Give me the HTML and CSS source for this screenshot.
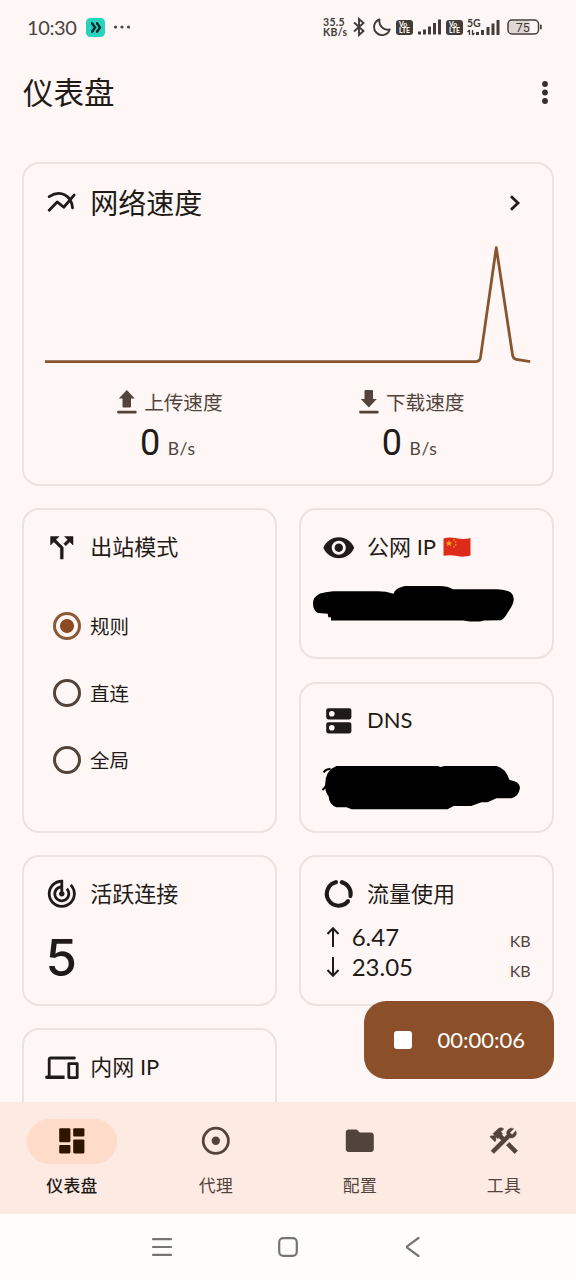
FILE: index.html
```html
<!DOCTYPE html>
<html lang="zh-CN">
<head>
<meta charset="utf-8">
<title>仪表盘</title>
<link rel="stylesheet" href="styles.css">
</head>
<body>
<div class="screen">
  <div class="status">
    <span class="clock">10:30</span>
    <svg class="app-badge" width="19" height="19" viewBox="0 0 19 19"><rect width="19" height="19" rx="4.5" fill="#25d3bf"/><path d="M5 5.3h1.200l2.800 4.100-2.800 4.200H5M10 5.3h1.200l2.800 4.100-2.800 4.200H10" fill="none" stroke="#0b2623" stroke-width="2.300"/></svg>
    <svg class="dots" width="18" height="4" viewBox="0 0 18 4" fill="#4a4543"><circle cx="2.5" cy="2" r="1.6"/><circle cx="9" cy="2" r="1.6"/><circle cx="15.500" cy="2" r="1.6"/></svg>
    <span class="rate"><span>35.5</span><span>KB/s</span></span>
    <svg class="bt" width="12" height="20" viewBox="0 0 12 20" fill="none" stroke="#413c3a" stroke-width="1.9"><path d="M1 5.500l9.500 8.500L6 18V2l4.500 4L1 14.500"/></svg>
    <svg class="moon" width="18" height="18" viewBox="0 0 18 18" fill="none" stroke="#413c3a" stroke-width="1.9" stroke-linejoin="round"><path d="M6.500 1.500A8 8 0 1 0 16.700 11.500A8.500 8.500 0 0 1 6.500 1.500z"/></svg>
    <svg class="volte" width="17" height="15" viewBox="0 0 17 15"><rect width="17" height="15" rx="3" fill="#413c3a"/><text x="3" y="7" class="volte-text">Vo</text><text x="3" y="13.300" class="volte-text">LTE</text></svg>
    <svg class="bars" width="24" height="16" viewBox="0 0 24 16" fill="#413c3a"><rect x="0" y="12.500" width="3" height="3"/><rect x="5" y="10.500" width="3" height="5"/><rect x="10" y="7.500" width="3" height="8"/><rect x="15" y="4" width="3" height="11.500"/><rect x="20" y="0.500" width="3" height="15"/></svg>
    <svg class="volte second" width="17" height="15" viewBox="0 0 17 15"><rect width="17" height="15" rx="3" fill="#413c3a"/><text x="3" y="7" class="volte-text">Vo</text><text x="3" y="13.300" class="volte-text">LTE</text></svg>
    <svg class="five" width="34" height="23" viewBox="0 -3 34 23" fill="#413c3a"><text x="0" y="7.500" class="five-text">5G</text><path d="M2.500 16v-5M0.500 13l2-2M5.500 11v5M7.500 14l-2 2" stroke="#413c3a" stroke-width="1.300"/><rect x="9" y="13" width="3" height="3"/><rect x="14" y="11" width="3" height="5"/><rect x="19.500" y="8" width="3" height="8"/><rect x="24.500" y="4.500" width="3" height="11.500"/><rect x="29.500" y="1" width="3" height="15"/></svg>
    <svg class="battery" width="35" height="16" viewBox="0 0 35 16"><rect x="2" y="2" width="21" height="12" rx="3" fill="#dfd8d5"/><rect x="1" y="1" width="30.500" height="14" rx="4" fill="none" stroke="#413c3a" stroke-width="1.500"/><rect x="33" y="5.500" width="1.700" height="5" rx=".8" fill="#413c3a"/><text x="8.800" y="12.500" class="battery-text">75</text></svg>
  </div>

  <header class="appbar">
    <h1>仪表盘</h1>
    <svg width="8" height="26" viewBox="0 0 8 26" fill="#332e2c"><circle cx="4" cy="4" r="2.900"/><circle cx="4" cy="12.500" r="2.900"/><circle cx="4" cy="21" r="2.900"/></svg>
  </header>

  <main class="content">
    <section class="card speed">
      <div class="card-head">
        <svg class="icon" viewBox="0 0 24 24" fill="none" stroke="currentColor" stroke-width="2" stroke-linecap="round" stroke-linejoin="round"><path d="M3 7.600C11 2.500 18.700 6.500 19.700 15.600M3 17.300l5.700-5.900 4.700 3.800 7.400-8.700"/></svg>
        <h2 class="big">网络速度</h2>
        <svg class="chevron" width="12" height="18" viewBox="0 0 12 18" fill="none" stroke="#1f1b18" stroke-width="2.800" stroke-linecap="square"><path d="M3 3.300l6 5.700-6 5.700"/></svg>
      </div>
      <svg class="chart" viewBox="0 0 486 150" fill="none" stroke="#875530" stroke-width="2.800" stroke-linecap="butt" stroke-linejoin="round"><path d="M0 141.700H431Q435.500 141.700 436.200 137.500L452 27.500L468.300 135Q468.800 139 472 139.500L486 141.700"/></svg>
      <div class="rates">
        <div class="rate-col">
          <div class="rate-label"><svg width="28" height="28" viewBox="0 0 28 28" fill="currentColor"><path d="M13.800 2L21.800 10.500H18V18.500Q18 19.500 17 19.500H10.500Q9.500 19.500 9.500 18.500V10.500H5.800z"/><rect x="4.200" y="22.800" width="19.400" height="2.600" rx="1"/></svg><span>上传速度</span></div>
          <div class="rate-value"><b>0</b><span>B/s</span></div>
        </div>
        <div class="rate-col">
          <div class="rate-label"><svg width="28" height="28" viewBox="0 0 28 28" fill="currentColor"><path d="M13.800 19.500L21.800 11H18V3Q18 2 17 2H10.500Q9.500 2 9.500 3V11H5.800z"/><rect x="4.200" y="22.800" width="19.400" height="2.600" rx="1"/></svg><span>下载速度</span></div>
          <div class="rate-value"><b>0</b><span>B/s</span></div>
        </div>
      </div>
    </section>

    <section class="card mode">
      <div class="card-head">
        <svg class="icon" viewBox="0 0 24 24" fill="currentColor"><path d="M14 4l2.290 2.290-2.880 2.880 1.420 1.420 2.880-2.880L20 10V4h-6zm-4 0H4v6l2.290-2.290 4.710 4.700V20h2v-8.410l-5.290-5.300L10 4z" stroke="currentColor" stroke-width=".4"/></svg>
        <h2>出站模式</h2>
      </div>
      <div class="radios">
        <div class="radio-row"><i class="radio checked"></i><span>规则</span></div>
        <div class="radio-row"><i class="radio"></i><span>直连</span></div>
        <div class="radio-row"><i class="radio"></i><span>全局</span></div>
      </div>
    </section>

    <section class="card public-ip">
      <div class="card-head">
        <svg class="icon" viewBox="0 0 24 24" fill="currentColor"><path d="M12 4.500C7 4.500 2.730 7.610 1 12c1.730 4.390 6 7.500 11 7.500s9.270-3.110 11-7.500c-1.730-4.390-6-7.500-11-7.500zM12 17c-2.760 0-5-2.240-5-5s2.240-5 5-5 5 2.240 5 5-2.240 5-5 5zm0-8c-1.660 0-3 1.340-3 3s1.340 3 3 3 3-1.340 3-3-1.340-3-3-3z"/></svg>
        <h2>公网 IP</h2>
        <svg class="flag" width="28" height="20" viewBox="0 0 28 20"><path d="M.5 1.500Q6-.5 13.500 1.200T27.500 1V18.500Q21 20.500 14 19T.5 18.800z" fill="#de2c1b"/><path d="M6 3l.9 2.300 2.500.1-2 1.500.8 2.400L6 7.900 3.800 9.300l.8-2.400-2-1.500 2.500-.1z" fill="#f5a31f"/><g fill="#f5a31f"><circle cx="11" cy="3" r=".8"/><circle cx="12.700" cy="5" r=".8"/><circle cx="12.700" cy="7.700" r=".8"/><circle cx="11" cy="9.800" r=".8"/></g></svg>
      </div>
      <svg class="blot" width="202" height="38" viewBox="313 585 202 38"><path d="M333 591.300Q325 592 320 593.500Q313 597 313 603Q313 611 318 612.900L327.700 613.700L328.300 617.300H331V620.500H463L470 621.500H480L484 620.500L501 620.300Q505 618 508 612Q514 604 513.700 599Q513.500 593 508 591Q502 589.500 497 589.300H453Q447 586 440 586H405Q395 588 393.500 593.700Q386 591.300 378 591.300z"/></svg>
    </section>

    <section class="card dns">
      <div class="card-head">
        <svg class="icon" viewBox="0 0 24 24" fill="currentColor"><path fill-rule="evenodd" d="M4.500 3h15A1.500 1.500 0 0 1 21 4.500v5a1.500 1.500 0 0 1-1.500 1.500h-15A1.500 1.500 0 0 1 3 9.500v-5A1.500 1.500 0 0 1 4.500 3zM7 5a2 2 0 1 0 0 4 2 2 0 0 0 0-4zM4.500 13h15a1.500 1.500 0 0 1 1.500 1.500v5a1.500 1.500 0 0 1-1.500 1.500h-15A1.500 1.500 0 0 1 3 19.500v-5A1.500 1.500 0 0 1 4.500 13zM7 15a2 2 0 1 0 0 4 2 2 0 0 0 0-4z"/></svg>
        <h2>DNS</h2>
      </div>
      <svg class="blot" width="199" height="45" viewBox="322.500 765 199 45"><path d="M337 766H438L441 767L445 766H497Q506 768 510 780Q520 781 520.500 788Q519 797 511.700 798.300H497L488 802.300H482L471.700 806H454L448 809.300H352L347 807.300H337Q329 804 329.300 796.700Q325 791 325.700 784Q326 770 337 766z"/><path d="M324.200 772.500Q326 769 331 769M323 790.200L327 785.500" fill="none" stroke="#000" stroke-width="2"/></svg>
    </section>

    <section class="card active">
      <div class="card-head">
        <svg class="icon" viewBox="0 0 24 24" fill="currentColor"><path d="M19.070 4.930l-1.410 1.410C19.100 7.790 20 9.790 20 12c0 4.420-3.580 8-8 8s-8-3.580-8-8c0-4.080 3.050-7.440 7-7.930v2.020C8.160 6.570 6 9.030 6 12c0 3.310 2.690 6 6 6s6-2.690 6-6c0-1.660-.67-3.160-1.760-4.240l-1.410 1.410C15.550 9.900 16 10.900 16 12c0 2.210-1.790 4-4 4s-4-1.790-4-4c0-1.860 1.280-3.410 3-3.860v2.140c-.6.35-1 .98-1 1.720 0 1.100.9 2 2 2s2-.9 2-2c0-.74-.4-1.380-1-1.720V2h-1C6.480 2 2 6.480 2 12s4.480 10 10 10 10-4.480 10-10c0-2.760-1.120-5.260-2.930-7.070z"/></svg>
        <h2>活跃连接</h2>
      </div>
      <div class="count">5</div>
    </section>

    <section class="card usage">
      <div class="card-head">
        <svg class="icon" viewBox="0 0 24 24" fill="none" stroke="currentColor" stroke-width="2.900"><path d="M13.600 3.650A8.500 8.500 0 0 1 20.400 13.300M18.800 17A8.500 8.500 0 1 1 10.600 3.600" stroke-linecap="butt"/><path d="M14 3.740L14.200 3.780M20.260 13.700v-.1M18.700 17.100l-.3.400M10.100 3.700l-.2.050" stroke-width="2.700" stroke-linecap="round"/></svg>
        <h2>流量使用</h2>
      </div>
      <div class="flow"><svg width="14" height="22" viewBox="0 0 14 22"><path d="M7 21V2.500M1.500 8L7 2.300 12.500 8"/></svg><span>6.47</span><small>KB</small></div>
      <div class="flow"><svg width="14" height="22" viewBox="0 0 14 22"><path d="M7 1v18.500M1.500 14L7 19.700 12.500 14"/></svg><span>23.05</span><small>KB</small></div>
    </section>

    <section class="card lan">
      <div class="card-head">
        <svg class="icon" viewBox="0 0 24 24" fill="currentColor"><path d="M4 6h17a1 1 0 0 0 0-2H4c-1.100 0-2 .9-2 2v11.500h-.7a1.250 1.250 0 0 0 0 2.500H14v-2.500H4V6zm19 2h-6c-.55 0-1 .45-1 1v10c0 .55.45 1 1 1h6c.55 0 1-.45 1-1V9c0-.55-.45-1-1-1zm-1 10h-4v-8h4v8z"/></svg>
        <h2>内网 IP</h2>
      </div>
    </section>
  </main>

  <div class="fab"><i class="stop"></i><span>00:00:06</span></div>

  <nav class="tabs">
    <div class="tab on"><div class="pill"><svg class="icon" viewBox="0 0 24 24" fill="currentColor"><rect x="3" y="3" width="8" height="10" rx=".8"/><rect x="3" y="15" width="8" height="6" rx=".8"/><rect x="13" y="3" width="8" height="6" rx=".8"/><rect x="13" y="11" width="8" height="10" rx=".8"/></svg></div><span>仪表盘</span></div>
    <div class="tab"><div class="pill"><svg class="icon" viewBox="0 0 24 24"><circle cx="12" cy="12" r="9" fill="none" stroke="currentColor" stroke-width="2"/><circle cx="12" cy="12" r="3" fill="currentColor"/></svg></div><span>代理</span></div>
    <div class="tab"><div class="pill"><svg class="icon" viewBox="0 0 24 24" fill="currentColor"><path d="M10.600 4.600c-.4-.4-.9-.6-1.400-.6H4c-1.100 0-2 .9-2 2v12c0 1.100.9 2 2 2h16c1.100 0 2-.9 2-2V8c0-1.100-.9-2-2-2h-8z"/></svg></div><span>配置</span></div>
    <div class="tab"><div class="pill"><svg class="icon" viewBox="0 0 24 24" fill="currentColor" stroke="currentColor" stroke-width=".3" stroke-linejoin="round"><path d="M13.783 15.172l2.121-2.121 5.996 5.996-2.121 2.121zM17.500 10c1.930 0 3.500-1.570 3.500-3.500 0-.58-.16-1.120-.41-1.600l-2.700 2.700-1.490-1.490 2.700-2.700c-.48-.25-1.020-.41-1.600-.41C15.570 3 14 4.570 14 6.500c0 .41.08.8.21 1.160l-1.850 1.850-1.780-1.780.71-.71-1.410-1.410L12 3.490c-1.170-1.170-3.070-1.170-4.240 0L4.220 7.030l1.410 1.410H2.810l-.71.71 3.540 3.540.71-.71V9.150l1.410 1.410.71-.71 1.780 1.780-7.410 7.410 2.120 2.120L16.340 9.790c.36.13.75.21 1.160.21z"/></svg></div><span>工具</span></div>
  </nav>

  <div class="sysnav">
    <svg width="20" height="20" viewBox="0 0 20 20"><path d="M1 2.200h18M1 10h18M1 17.800h18"/></svg>
    <svg width="20" height="20" viewBox="0 0 20 20"><rect x="1.200" y="1.200" width="17.600" height="17.600" rx="4"/></svg>
    <svg width="20" height="20" viewBox="0 0 20 20"><path d="M14.500 1L3.500 9Q2.500 10 3.500 11L14.500 19"/></svg>
  </div>
</div>
</body>
</html>
```

FILE: styles.css
```css
* { box-sizing: border-box; }

body {
  margin: 0;
  background: #fff7f5;
  color: #1f1b18;
  font-family: Lato, "Noto Sans CJK SC", sans-serif;
}

.screen {
  position: relative;
  display: flex;
  flex-direction: column;
  width: 576px;
  height: 1280px;
  overflow: hidden;
}

svg { display: block; flex: none; }
h1, h2 { margin: 0; font-weight: 400; }

/* Status bar */
.status {
  display: flex;
  align-items: center;
  height: 54px;
  padding-left: 27px;
  color: #4a4543;
  flex: none;
}
.clock { width: 50px; font-size: 20px; line-height: 24px; white-space: nowrap; letter-spacing: -.4px; }
.app-badge { margin-left: 9px; }
.dots { margin-left: 8px; }
.rate { display: flex; flex-direction: column; width: 31px; margin-left: 192px; font-size: 10.500px; line-height: 10px; font-weight: 700; letter-spacing: .3px; color: #413c3a; white-space: nowrap; }
.bt { margin-left: -1px; }
.moon { margin-left: 8px; }
.volte { margin-left: 5px; }
.bars { margin-left: 5px; }
.volte.second { margin-left: 4px; }
.five { margin-left: 4px; }
.battery { margin-left: 6px; }
.volte-text { font-size: 6.800px; font-weight: 900; fill: #fff7f5; }
.five-text { font-size: 10.500px; font-weight: 700; }
.battery-text { font-size: 12.500px; fill: #413c3a; font-family: Roboto, sans-serif; }

/* App bar */
.appbar {
  display: flex;
  align-items: center;
  justify-content: space-between;
  height: 78px;
  padding: 0 27px 0 23px;
  flex: none;
}
.appbar h1 { margin-top: -2px; font-size: 30.500px; line-height: 40px; }

/* Dashboard grid */
.content {
  display: grid;
  grid-template-columns: 1fr 1fr;
  grid-template-rows: 324px 151px 151px 151px 151px;
  gap: 22.300px;
  height: 970px;
  padding: 30px 22.400px 0;
  overflow: hidden;
  flex: none;
}
.card {
  border: 2px solid #eae3e0;
  border-radius: 17px;
  padding: 20.400px 21px 0;
  min-width: 0;
}
.speed { grid-column: 1 / 3; padding-top: 22px; }
.mode { grid-row: 2 / 4; }
.card-head { display: flex; align-items: center; height: 33.600px; }
.icon { width: 33.600px; height: 33.600px; }
.card-head h2 { margin: -1px 0 0 11.300px; font-size: 22px; line-height: 32px; white-space: nowrap; }
.card-head h2.big { margin-top: 0; font-size: 28px; line-height: 34px; }
.chevron { margin-left: auto; margin-right: 10px; }
.card-head h2 + .flag { margin-left: 7px; }

.chart { width: 100%; height: 150px; }
.rates { display: grid; grid-template-columns: 1fr 1fr; margin-top: 18px; padding-left: 1.500px; }
.rate-col { display: flex; flex-direction: column; align-items: center; }
.rate-label { display: flex; align-items: center; gap: 3px; height: 28px; font-size: 19.600px; color: #52443d; }
.rate-label span { margin-top: -1px; }
.rate-value { display: flex; align-items: baseline; gap: 7.500px; margin-top: 4px; line-height: 46px; }
.rate-value b { font: 400 36px/46px Roboto, sans-serif; }
.rate-value span { font-size: 17.500px; color: #52443d; letter-spacing: .6px; }

.radios { display: flex; flex-direction: column; gap: 39px; margin-top: 48px; padding-left: 8px; }
.radio-row { display: flex; align-items: center; gap: 8.500px; height: 28px; font-size: 19.500px; }
.radio-row span { margin-top: -2px; }
.radio { width: 28px; height: 28px; border: 3px solid #52443d; border-radius: 50%; }
.radio.checked { border-color: #8b5a38; background: radial-gradient(circle, #8b4a20 6.500px, transparent 7.300px); }

.public-ip .blot { margin: 20.500px 0 0 -9px; }
.dns .blot { margin: 27px 0 0 0; }

.count { margin-top: 17.500px; padding-left: 0; font: 500 51px/60px Inter, sans-serif; letter-spacing: -1px; }

.flow { display: flex; align-items: center; height: 30px; padding-left: 4px; }
.flow svg { fill: none; stroke: currentColor; stroke-width: 2; }
.flow span { margin-left: 11.500px; font-size: 24px; }
.flow small { margin-left: auto; font-size: 16px; color: #52443d; padding-top: 7px; }
.usage .card-head { margin-bottom: 11px; }

/* Running timer */
.fab {
  position: absolute;
  right: 22px;
  bottom: 201px;
  display: flex;
  align-items: center;
  width: 190px;
  height: 78px;
  padding-left: 30px;
  border-radius: 22px;
  background: #8b4f29;
  color: #fff;
  font-size: 22px;
}
.stop { width: 18px; height: 18px; border-radius: 3px; background: #fff; }
.fab span { margin: -2px 0 0 25.500px; white-space: nowrap; }

/* Bottom tabs */
.tabs { display: flex; height: 112px; background: #fdeae3; flex: none; }
.tab { display: flex; flex: 1; flex-direction: column; align-items: center; padding-top: 17px; color: #52443d; }
.pill { display: flex; align-items: center; justify-content: center; width: 90px; height: 45px; border-radius: 23px; }
.pill .icon { margin-top: -1px; }
.tab span { margin-top: 9.500px; font-size: 16.800px; line-height: 24px; letter-spacing: .4px; }
.on { color: #1f1b18; }
.on .pill { background: #ffdbc9; color: #2f1400; }
.on span { font-weight: 500; }

/* System navigation */
.sysnav { display: flex; align-items: center; justify-content: center; gap: 106px; height: 66px; background: #fffdfb; flex: none; }
.sysnav svg { fill: none; stroke: #777472; stroke-width: 2.200; stroke-linecap: round; }
```
